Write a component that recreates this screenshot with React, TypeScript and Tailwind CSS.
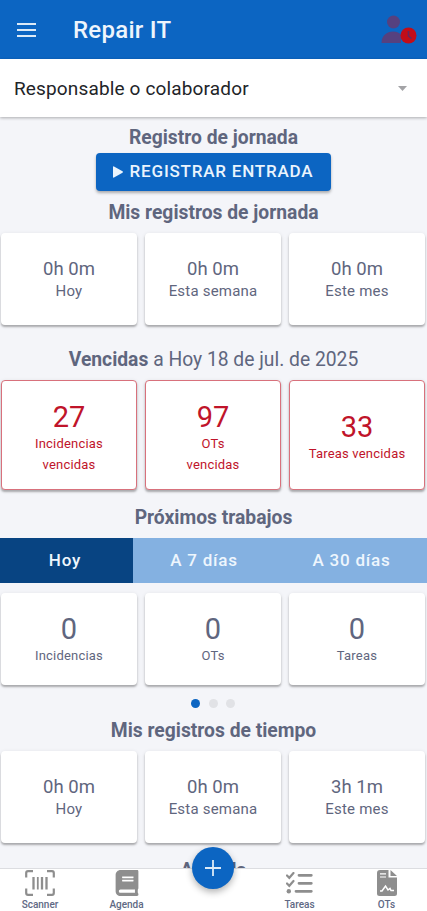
import React from "react";
import { FaBook } from "react-icons/fa";

const worked = [
  { value: "0h 0m", label: "Hoy" },
  { value: "0h 0m", label: "Esta semana" },
  { value: "0h 0m", label: "Este mes" },
];

const overdue = [
  { value: "27", label: ["Incidencias", "vencidas"] },
  { value: "97", label: ["OTs", "vencidas"] },
  { value: "33", label: ["Tareas vencidas"] },
];

const upcoming = [
  { value: "0", label: "Incidencias" },
  { value: "0", label: "OTs" },
  { value: "0", label: "Tareas" },
];

const tracked = [
  { value: "0h 0m", label: "Hoy" },
  { value: "0h 0m", label: "Esta semana" },
  { value: "3h 1m", label: "Este mes" },
];

const cardShadow = "shadow-[0_2px_2px_rgba(0,0,0,0.26),0_1px_4px_rgba(0,0,0,0.1)]";

const Heading: React.FC<{ className?: string; children: React.ReactNode }> = ({ className = "h-[42px]", children }) => (
  <h2 className={`flex shrink-0 items-center justify-center whitespace-pre pt-[2px] text-[19.3px] font-bold ${className}`}>{children}</h2>
);

const TimeCards: React.FC<{ items: { value: string; label: string }[] }> = ({ items }) => (
  <div className="grid shrink-0 grid-cols-3 gap-2 pl-px pr-0.5">
    {items.map((item) => (
      <div key={item.label} className={`flex h-[92px] flex-col items-center justify-center rounded bg-white pt-[2px] ${cardShadow}`}>
        <span className="text-[18.5px] leading-[22px]">{item.value}</span>
        <span className="text-[15px] leading-[22px] tracking-[0.2px]">{item.label}</span>
      </div>
    ))}
  </div>
);

const UserClockIcon = () => (
  <svg width="36" height="30" viewBox="0 0 36 30">
    <circle cx="12.500" cy="7" r="6.500" fill="#56417f" />
    <path d="M0.500 28 C0.500 20.500 6 16.500 12 16.500 C16 16.500 18.500 18 20 20 V28 Z" fill="#56417f" />
    <circle cx="27.500" cy="20.500" r="8" fill="#c20d18" />
    <path d="M27.500 16 V21 L30.500 23.500" fill="none" stroke="#65265f" strokeWidth="1.600" />
  </svg>
);

const ScannerIcon = () => (
  <svg width="30" height="26" viewBox="0 0 30 26" fill="none" stroke="#8e8e8e">
    <path d="M1.200 7.500 V3 Q1.200 1.200 3 1.200 H8 M22 1.200 H27 Q28.800 1.200 28.800 3 V7.500 M28.800 18.500 V23 Q28.800 24.800 27 24.800 H22 M8 24.800 H3 Q1.200 24.800 1.200 23 V18.500" strokeWidth="2.200" />
    <path d="M8.500 7 V19.500 M17 7 V19.500 M21.500 7 V19.500" strokeWidth="2.300" />
    <path d="M12.800 7 V19.500" strokeWidth="1.800" />
  </svg>
);

const ChecklistIcon = () => (
  <svg width="27" height="22" viewBox="0 0 27 22" fill="none" stroke="#8e8e8e" strokeLinecap="round">
    <path d="M1 3.500 L3.300 5.800 L7.500 1 M1 11.500 L3.300 13.800 L7.500 9" strokeWidth="2.200" />
    <path d="M13 3.300 H25.300 M13 11.300 H25.300 M10 19.300 H25.300" strokeWidth="2.800" />
    <circle cx="2.800" cy="19.300" r="2.200" fill="#8e8e8e" stroke="none" />
  </svg>
);

const WorkOrderIcon = () => (
  <svg width="20" height="26" viewBox="0 0 20 26">
    <path d="M3 0 H11.500 V7.500 H20 V23.500 Q20 26 17.500 26 H2.500 Q0 26 0 23.500 V3 Q0 0 3 0 Z M13.500 0 L20 6 H13.500 Z" fill="#8e8e8e" />
    <path d="M3 3.800 H9 M3 7 H9" stroke="white" strokeWidth="1.200" />
    <path d="M3 21 H5 L8.500 16 L11 20 L13 18.500 L14 20.500 H17" fill="none" stroke="white" strokeWidth="1.500" />
  </svg>
);

const NavItem: React.FC<{ label: string; children: React.ReactNode }> = ({ label, children }) => (
  <div className="flex flex-col items-center pt-[1px] text-[#8e8e8e]">
    <div className="flex h-[26px] items-center">{children}</div>
    <span className="mt-[2px] text-[10px] font-medium leading-[14px] text-[#606984]">{label}</span>
  </div>
);

export default function App() {
  return (
    <div className="relative flex h-[911px] w-[427px] flex-col overflow-hidden bg-[#f4f5f9] font-['Roboto',sans-serif] text-[#5f667e]">
      <header className="flex h-[59px] shrink-0 items-center bg-[#0c65c2] pl-[17px] pr-[10px]">
        <div className="flex w-[19px] flex-col gap-[4px]">
          <span className="h-[2px] bg-[#dceaf7]" />
          <span className="h-[2px] bg-[#dceaf7]" />
          <span className="h-[2px] bg-[#dceaf7]" />
        </div>
        <h1 className="ml-[37px] flex-1 text-[24px] font-medium tracking-[0.25px] text-[#eef5fc]">Repair IT</h1>
        <UserClockIcon />
      </header>

      <div className="z-10 flex h-[58px] shrink-0 items-center justify-between bg-white pl-[14px] pr-[20px] text-[19px] text-[#222428] shadow-[0_1px_3px_rgba(0,0,0,0.3)]">
        <span className="pt-[2px] tracking-[0.15px]">Responsable o colaborador</span>
        <svg width="9" height="5" viewBox="0 0 9 5" fill="#a3a3a6">
          <path d="M0 0 H9 L4.500 5 Z" />
        </svg>
      </div>

      <main className="flex min-h-0 flex-1 flex-col overflow-hidden">
        <Heading className="h-[36px] pt-[7px]">Registro de jornada</Heading>
        <button className="mr-px flex h-[38px] w-[235px] shrink-0 items-center justify-center gap-[7px] self-center rounded bg-[#0c65c2] text-[17px] font-medium tracking-[0.8px] text-[#eaf4fd] shadow-[0_2px_3px_rgba(0,0,0,0.3)]">
          <svg width="10" height="12" viewBox="0 0 10 12" fill="currentColor">
            <path d="M0 1 Q0 0 1 0.500 L9.500 5.300 Q10.300 6 9.500 6.700 L1 11.500 Q0 12 0 11 Z" />
          </svg>
          REGISTRAR ENTRADA
        </button>
        <Heading>Mis registros de jornada</Heading>
        <TimeCards items={worked} />

        <Heading className="mt-[13px] h-[42px]">
          Vencidas<span className="font-normal"> a Hoy 18 de jul. de 2025</span>
        </Heading>
        <div className="grid shrink-0 grid-cols-3 gap-2 pl-px pr-0.5">
          {overdue.map((item) => (
            <div key={item.value} className={`flex h-[110px] flex-col items-center justify-center rounded border border-[#d8717c] bg-white pt-[5px] text-[#c0142a] ${cardShadow}`}>
              <span className="text-[29px] leading-[34px]">{item.value}</span>
              {item.label.map((line) => (
                <span key={line} className="text-[13px] leading-[20.500px] tracking-[0.2px]">{line}</span>
              ))}
            </div>
          ))}
        </div>

        <Heading className="mt-[6px] h-[42px]">Próximos trabajos</Heading>
        <div className="grid h-[45px] shrink-0 grid-cols-[133px_142px_152px] bg-[#84b1e1] text-[17px] font-medium tracking-[0.8px] text-[#eef6fd]">
          <div className="flex items-center justify-center bg-[#084482] pr-[3px] pt-px">Hoy</div>
          <div className="flex items-center justify-center pt-px">A 7 días</div>
          <div className="flex items-center justify-center pl-px pt-px">A 30 días</div>
        </div>
        <div className="mt-[10px] grid shrink-0 grid-cols-3 gap-2 pl-px pr-0.5">
          {upcoming.map((item) => (
            <div key={item.label} className={`flex h-[92px] flex-col items-center justify-center rounded bg-white pt-px ${cardShadow}`}>
              <span className="text-[29px] leading-[34px]">{item.value}</span>
              <span className="text-[13px] leading-[20.500px] tracking-[0.2px]">{item.label}</span>
            </div>
          ))}
        </div>
        <div className="mt-[14px] flex h-[9px] shrink-0 justify-center gap-[8.500px] pr-px">
          <span className="size-[9px] rounded-full bg-[#0c65c2]" />
          <span className="size-[9px] rounded-full bg-[#e1e2e6]" />
          <span className="size-[9px] rounded-full bg-[#e1e2e6]" />
        </div>

        <Heading className="mt-px h-[42px]">Mis registros de tiempo</Heading>
        <TimeCards items={tracked} />
        <Heading className="mt-[6px] h-[42px]">Agenda</Heading>
      </main>

      <nav className="relative grid h-[43px] shrink-0 grid-cols-[80px_93px_80px_93px_81px] border-t border-[#dcdde1] bg-white">
        <NavItem label="Scanner"><ScannerIcon /></NavItem>
        <NavItem label="Agenda"><FaBook size={26} /></NavItem>
        <button className="absolute left-[192px] top-[-22px] flex size-[42px] items-center justify-center rounded-full bg-[#0c65c2] shadow-[0_3px_7px_rgba(0,0,0,0.3)]">
          <svg width="16" height="16" viewBox="0 0 16 16" stroke="#dceaf7" strokeWidth="1.800">
            <path d="M8 0 V16 M0 8 H16" />
          </svg>
        </button>
        <div />
        <NavItem label="Tareas"><ChecklistIcon /></NavItem>
        <NavItem label="OTs"><WorkOrderIcon /></NavItem>
      </nav>
    </div>
  );
}
